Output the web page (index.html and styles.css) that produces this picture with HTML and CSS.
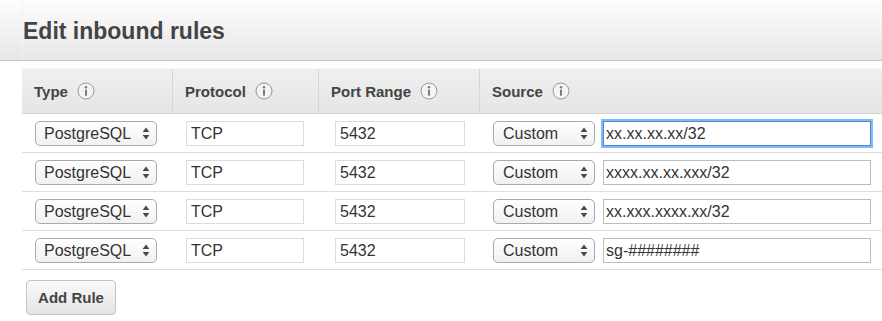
FILE: index.html
```html
<!DOCTYPE html>
<html lang="en">
<head>
  <meta charset="UTF-8">
  <title>Edit inbound rules</title>
  <link rel="stylesheet" href="styles.css">
</head>
<body>

  <!-- Judul dialog -->
  <div class="page-head">
    <div class="title-box">
      <h2 class="title">Edit inbound rules</h2>
    </div>
  </div>

  <!-- Tabel aturan -->
  <div class="rules">
    <div class="row head">
      <div class="cell col-type">Type <svg class="info" width="18" height="18" viewBox="0 0 18 18"><circle cx="9" cy="9" r="8" fill="#f4f4f4" stroke="#9a9a9a"/><circle cx="9" cy="5.2" r="1.2" fill="#7d7d7d"/><rect x="8" y="7.4" width="2" height="6.4" rx="0.6" fill="#7d7d7d"/></svg></div>
      <div class="cell col-proto">Protocol <svg class="info" width="18" height="18" viewBox="0 0 18 18"><circle cx="9" cy="9" r="8" fill="#f4f4f4" stroke="#9a9a9a"/><circle cx="9" cy="5.2" r="1.2" fill="#7d7d7d"/><rect x="8" y="7.4" width="2" height="6.4" rx="0.6" fill="#7d7d7d"/></svg></div>
      <div class="cell col-port">Port Range <svg class="info" width="18" height="18" viewBox="0 0 18 18"><circle cx="9" cy="9" r="8" fill="#f4f4f4" stroke="#9a9a9a"/><circle cx="9" cy="5.2" r="1.2" fill="#7d7d7d"/><rect x="8" y="7.4" width="2" height="6.4" rx="0.6" fill="#7d7d7d"/></svg></div>
      <div class="cell col-source">Source <svg class="info" width="18" height="18" viewBox="0 0 18 18"><circle cx="9" cy="9" r="8" fill="#f4f4f4" stroke="#9a9a9a"/><circle cx="9" cy="5.2" r="1.2" fill="#7d7d7d"/><rect x="8" y="7.4" width="2" height="6.4" rx="0.6" fill="#7d7d7d"/></svg></div>
    </div>

    <div class="row">
      <div class="cell col-type"><div class="select sel-type"><span>PostgreSQL</span><svg class="arrows" width="8" height="13" viewBox="0 0 8 13"><path d="M4 0.5L7.4 5H0.6Z M4 12.5L7.4 8H0.6Z" fill="#4a4a4a"/></svg></div></div>
      <div class="cell col-proto"><input class="field plain f-proto" value="TCP"></div>
      <div class="cell col-port"><input class="field plain f-port" value="5432"></div>
      <div class="cell col-source"><div class="select sel-source"><span>Custom</span><svg class="arrows" width="8" height="13" viewBox="0 0 8 13"><path d="M4 0.5L7.4 5H0.6Z M4 12.5L7.4 8H0.6Z" fill="#4a4a4a"/></svg></div><input class="field f-source focus" value="xx.xx.xx.xx/32"></div>
    </div>

    <div class="row">
      <div class="cell col-type"><div class="select sel-type"><span>PostgreSQL</span><svg class="arrows" width="8" height="13" viewBox="0 0 8 13"><path d="M4 0.5L7.4 5H0.6Z M4 12.5L7.4 8H0.6Z" fill="#4a4a4a"/></svg></div></div>
      <div class="cell col-proto"><input class="field plain f-proto" value="TCP"></div>
      <div class="cell col-port"><input class="field plain f-port" value="5432"></div>
      <div class="cell col-source"><div class="select sel-source"><span>Custom</span><svg class="arrows" width="8" height="13" viewBox="0 0 8 13"><path d="M4 0.5L7.4 5H0.6Z M4 12.5L7.4 8H0.6Z" fill="#4a4a4a"/></svg></div><input class="field f-source" value="xxxx.xx.xx.xxx/32"></div>
    </div>

    <div class="row">
      <div class="cell col-type"><div class="select sel-type"><span>PostgreSQL</span><svg class="arrows" width="8" height="13" viewBox="0 0 8 13"><path d="M4 0.5L7.4 5H0.6Z M4 12.5L7.4 8H0.6Z" fill="#4a4a4a"/></svg></div></div>
      <div class="cell col-proto"><input class="field plain f-proto" value="TCP"></div>
      <div class="cell col-port"><input class="field plain f-port" value="5432"></div>
      <div class="cell col-source"><div class="select sel-source"><span>Custom</span><svg class="arrows" width="8" height="13" viewBox="0 0 8 13"><path d="M4 0.5L7.4 5H0.6Z M4 12.5L7.4 8H0.6Z" fill="#4a4a4a"/></svg></div><input class="field f-source" value="xx.xxx.xxxx.xx/32"></div>
    </div>

    <div class="row">
      <div class="cell col-type"><div class="select sel-type"><span>PostgreSQL</span><svg class="arrows" width="8" height="13" viewBox="0 0 8 13"><path d="M4 0.5L7.4 5H0.6Z M4 12.5L7.4 8H0.6Z" fill="#4a4a4a"/></svg></div></div>
      <div class="cell col-proto"><input class="field plain f-proto" value="TCP"></div>
      <div class="cell col-port"><input class="field plain f-port" value="5432"></div>
      <div class="cell col-source"><div class="select sel-source"><span>Custom</span><svg class="arrows" width="8" height="13" viewBox="0 0 8 13"><path d="M4 0.5L7.4 5H0.6Z M4 12.5L7.4 8H0.6Z" fill="#4a4a4a"/></svg></div><input class="field f-source" value="sg-########"></div>
    </div>
  </div>

  <!-- Tombol tambah -->
  <button class="btn">Add Rule</button>

</body>
</html>
```

FILE: styles.css
```css
/* Dasar */
body {
  margin: 0;
  font-family: "Liberation Sans", Arial, sans-serif;
  color: #444;
  background: #fff;
  overflow: hidden;
}

/* Judul */
.page-head {
  height: 60px;
  background: linear-gradient(#fdfdfd, #e7e7e7);
  border-bottom: 1px solid #c9c9c9;
}
.title-box {
  margin-left: 22px;
  height: 60px;
  border-left: 1px solid #f2f2f2;
}
.title {
  margin: 0;
  padding-top: 18px;
  font-size: 23px;
  line-height: 26px;
  font-weight: bold;
  color: #444;
}

/* Tabel */
.rules {
  margin: 7px 0 0 22px;
  width: 880px;
}
.row {
  display: grid;
  grid-template-columns: 150px 146px 161px 1fr;
  height: 38px;
  border-bottom: 1px solid #dedede;
}
.row.head {
  height: 44px;
  background: linear-gradient(#efefef, #e6e6e6);
  border-top: 1px solid #f6f6f6;
  border-bottom: 1px solid #d2d2d2;
}
.cell {
  display: flex;
  align-items: center;
  padding-top: 1px;
}
.head .cell {
  font-size: 15px;
  font-weight: bold;
  color: #444;
  padding: 0 0 0 12px;
}
.head .cell + .cell {
  border-left: 1px solid #d6d6d6;
}
.info {
  margin-left: 9px;
}
.col-type { padding-left: 13px; }
.col-proto { padding-left: 14px; }
.col-port { padding-left: 17px; }
.col-source { padding-left: 14px; }

/* Pilihan */
.select {
  position: relative;
  box-sizing: border-box;
  height: 25px;
  display: flex;
  align-items: center;
  padding-left: 8px;
  border: 1px solid #a9a9a9;
  border-radius: 5px;
  background: linear-gradient(#fefefe, #f1f1f1);
  font-size: 16px;
  color: #333;
}
.sel-type { width: 122px; }
.sel-source { width: 102px; padding-left: 9px; }
.arrows {
  position: absolute;
  right: 6px;
  top: 5px;
}

/* Isian */
.field {
  box-sizing: border-box;
  height: 25px;
  margin: 0;
  padding: 0 3px;
  border: 1px solid #bdbdbd;
  font-family: "Liberation Sans", Arial, sans-serif;
  font-size: 16px;
  color: #333;
  background: #fff;
  outline: none;
}
.field.plain { border-color: #dcdcdc; padding-left: 4px; }
.f-proto { width: 118px; }
.f-port { width: 130px; }
.f-source { width: 268px; margin-left: 8px; padding-left: 2px; }
.field.focus {
  border: 1px solid #3f8be0;
  box-shadow: 0 0 0 2px rgba(95, 160, 235, 0.75);
}

/* Tombol */
.btn {
  margin: 10px 0 0 26px;
  width: 90px;
  height: 35px;
  border: 1px solid #c4c4c4;
  border-radius: 4px;
  background: linear-gradient(#fafafa, #e4e4e4);
  font-family: "Liberation Sans", Arial, sans-serif;
  font-size: 15px;
  font-weight: bold;
  color: #444;
  cursor: pointer;
}
```
